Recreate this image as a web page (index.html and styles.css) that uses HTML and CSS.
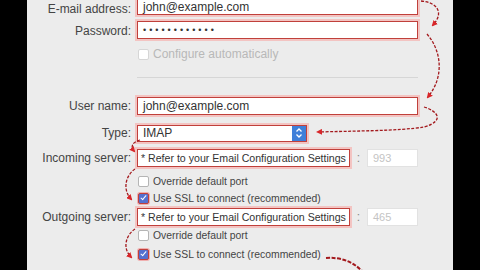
FILE: index.html
```html
<!DOCTYPE html>
<html lang="en">
<head>
  <meta charset="UTF-8">
  <title>Account Settings</title>
  <link rel="stylesheet" href="styles.css">
</head>
<body>

<div class="frame">
  <div class="panel">
    <div class="form">
      <div class="row r-email">
        <label>E-mail address:</label>
        <div class="box hl wide">john@example.com</div>
      </div>
      <div class="row r-pass">
        <label>Password:</label>
        <div class="box hl wide dots">••••••••••••</div>
      </div>
      <div class="row r-auto check-row">
        <span></span>
        <div class="check off"><i class="cb"></i>Configure automatically</div>
      </div>

      <div class="sep"></div>

      <div class="row r-user">
        <label>User name:</label>
        <div class="box hl wide">john@example.com</div>
      </div>
      <div class="row r-type">
        <label>Type:</label>
        <div class="box hl select">IMAP
          <span class="stepper">
            <svg width="8" height="12" viewBox="0 0 8 12"><path d="M1.5 4.5 L4 2 L6.5 4.5 M1.5 7.5 L4 10 L6.5 7.5" fill="none" stroke="#fff" stroke-width="1.3"/></svg>
          </span>
        </div>
      </div>
      <div class="row r-in">
        <label>Incoming server:</label>
        <div class="server">
          <div class="box hl host">* Refer to your Email Configuration Settings</div>
          <span class="colon">:</span>
          <div class="box port">993</div>
        </div>
      </div>
      <div class="row r-ov1 check-row">
        <span></span>
        <div class="check small"><i class="cb"></i>Override default port</div>
      </div>
      <div class="row r-ssl1 check-row">
        <span></span>
        <div class="check small"><i class="cb on"></i>Use SSL to connect (recommended)</div>
      </div>
      <div class="row r-out">
        <label>Outgoing server:</label>
        <div class="server">
          <div class="box hl host">* Refer to your Email Configuration Settings</div>
          <span class="colon">:</span>
          <div class="box port">465</div>
        </div>
      </div>
      <div class="row r-ov2 check-row">
        <span></span>
        <div class="check small"><i class="cb"></i>Override default port</div>
      </div>
      <div class="row r-ssl2 check-row">
        <span></span>
        <div class="check small"><i class="cb on"></i>Use SSL to connect (recommended)</div>
      </div>
    </div>
  </div>

  <!-- hand drawn annotation arrows -->
  <svg class="arrows" width="480" height="270" viewBox="0 0 480 270">
    <defs>
      <marker id="head" markerWidth="6" markerHeight="6" refX="4" refY="3" orient="auto" markerUnits="userSpaceOnUse">
        <path d="M0 0 L6 3 L0 6 Z" fill="#d8262a"/>
      </marker>
    </defs>
    <g fill="none" stroke="#a3191d" stroke-width="1.3" stroke-dasharray="3 1.5" marker-end="url(#head)">
      <path d="M421 1 C436 2, 445 12, 433 25"/>
      <path d="M427 34 C441 50, 445 76, 428 97"/>
      <path d="M424 107 C438 111, 445 121, 424 127 C400 131, 350 131, 318 132"/>
      <path d="M140 140 C133 142, 130 146, 134 151"/>
      <path d="M135 169 C126 175, 122 189, 131 199"/>
      <path d="M135 229 C126 235, 122 248, 131 257"/>
    </g>
    <path d="M326 258 C340 257, 352 261, 362 271" fill="none" stroke="#a3191d" stroke-width="2" stroke-dasharray="4 1.5"/>
  </svg>
</div>

</body>
</html>
```

FILE: styles.css
```css
body { margin: 0; background-color: #000; font-family: "Liberation Sans", Arial, sans-serif; font-size: 12px; color: #444; }
.frame { position: relative; width: 480px; height: 270px; overflow: hidden; display: flex; }
.panel { margin-left: 27px; width: 426px; height: 270px; background-color: #ececec; }
.form { margin-top: -4px; }
.row { display: grid; grid-template-columns: 104px 1fr; column-gap: 6px; align-items: center; height: 18px; }
.row label { text-align: right; }
.check-row { height: 14px; }

.r-email label { padding-top: 6px; }
.r-email .box { padding-top: 3px; line-height: 13px; }
.r-pass { margin-top: 7px; }
.r-pass label { padding-top: 2px; }
.r-auto { margin-top: 8px; }
.r-type { margin-top: 9px; }
.r-in { margin-top: 7px; }
.r-ov1 { margin-top: 7px; }
.r-ssl1 { margin-top: 3px; }
.r-out { margin-top: 3px; }
.r-ov2 { margin-top: 2px; }
.r-ssl2 { margin-top: 5px; }

.sep { margin: 16px 0 19px 110px; width: 281px; height: 1px; background-color: #d6d6d6; }

.box { box-sizing: border-box; height: 18px; line-height: 16px; padding: 0 5px; color: #333; background-color: #fff; border: 1px solid #c7c7c7; white-space: nowrap; overflow: hidden; }
.box.hl { border: 1px solid #c0403b; box-shadow: 0 0 0 2px #f3c4c2; }
.wide { width: 281px; }
.dots { font-size: 9px; letter-spacing: 3px; }
.select { position: relative; width: 170px; height: 17px; line-height: 15px; }
.stepper { position: absolute; right: 0; top: 0; width: 14px; height: 15px; background-color: #3f7fd9; display: flex; align-items: center; justify-content: center; }
.stepper svg { display: block; }

.server { display: flex; align-items: center; }
.host { width: 213px; font-size: 10.6px; padding: 0 3px; }
.colon { width: 17px; text-align: center; color: #888; }
.port { width: 51px; color: #c4c4c4; border-color: #e2e2e2; font-size: 11px; }

.check { display: flex; align-items: center; color: #444; }
.check.small { font-size: 10.4px; }
.check.off { color: #b8b8b8; }
.cb { box-sizing: border-box; width: 11px; height: 11px; margin: 0 4px 0 1px; background-color: #fff; border: 1px solid #b5b5b5; border-radius: 2px; }
.off .cb { border-color: #d6d6d6; }
.cb.on { background-color: #5470d0; border: 1px solid #c0403b; box-shadow: 0 0 0 1px #f0b0b0; position: relative; }
.cb.on::after { content: ""; position: absolute; left: 3px; top: 0px; width: 2px; height: 5px; border: solid #fff; border-width: 0 1.5px 1.5px 0; transform: rotate(40deg); }

.arrows { position: absolute; left: 0; top: 0; }
```
